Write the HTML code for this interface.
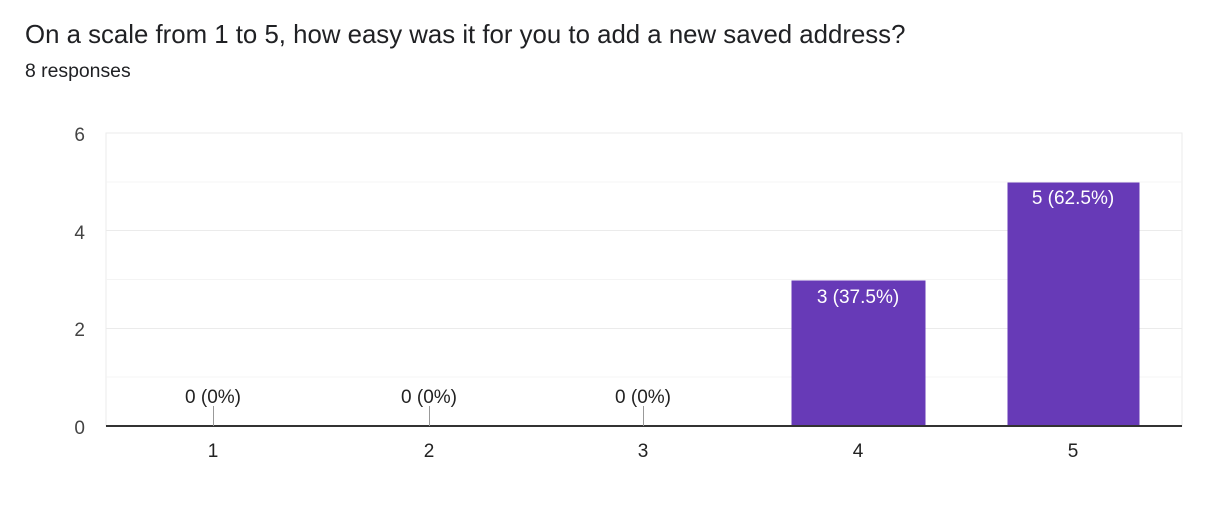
<!DOCTYPE html>
<html><head><meta charset="utf-8"><style>
html,body{margin:0;padding:0;background:#fff;width:1212px;height:512px;overflow:hidden;font-family:"Liberation Sans",Arial,sans-serif;}
.t{position:absolute;left:25px;top:21px;font-size:25.8px;color:#202124;white-space:nowrap;}
.r{position:absolute;left:25px;top:60px;font-size:19.4px;color:#202124;}
</style></head><body>
<div class="t">On a scale from 1 to 5, how easy was it for you to add a new saved address?</div>
<div class="r">8 responses</div>
<svg width="1212" height="512" style="position:absolute;left:0;top:0" font-family="Liberation Sans, Arial, sans-serif">
<rect x="106" y="133" width="1076" height="293" fill="none" stroke="#ebebeb" stroke-width="1"/>
<g stroke="#f4f4f4"><line x1="106" x2="1182" y1="182" y2="182"/><line x1="106" x2="1182" y1="279.5" y2="279.5"/><line x1="106" x2="1182" y1="377" y2="377"/></g>
<g stroke="#ebebeb"><line x1="106" x2="1182" y1="230.5" y2="230.5"/><line x1="106" x2="1182" y1="328.5" y2="328.5"/></g>
<rect x="791.5" y="280.5" width="134" height="146" fill="#673ab7"/>
<rect x="1007.5" y="182.5" width="132" height="244" fill="#673ab7"/>
<line x1="106" x2="1182" y1="426" y2="426" stroke="#333" stroke-width="2"/>
<g stroke="#999"><line x1="213.5" x2="213.5" y1="406" y2="426"/><line x1="429.5" x2="429.5" y1="406" y2="426"/><line x1="643.5" x2="643.5" y1="406" y2="426"/></g>
<g font-size="19" fill="#444" text-anchor="end"><text x="85" y="141">6</text><text x="85" y="239">4</text><text x="85" y="336">2</text><text x="85" y="434">0</text></g>
<g font-size="19" fill="#222" text-anchor="middle"><text x="213" y="457">1</text><text x="429" y="457">2</text><text x="643" y="457">3</text><text x="858" y="457">4</text><text x="1073" y="457">5</text>
<text x="213" y="403">0 (0%)</text><text x="429" y="403">0 (0%)</text><text x="643" y="403">0 (0%)</text></g>
<g font-size="19" fill="#fff" text-anchor="middle"><text x="858" y="303">3 (37.5%)</text><text x="1073" y="204">5 (62.5%)</text></g>
</svg>
</body></html>
